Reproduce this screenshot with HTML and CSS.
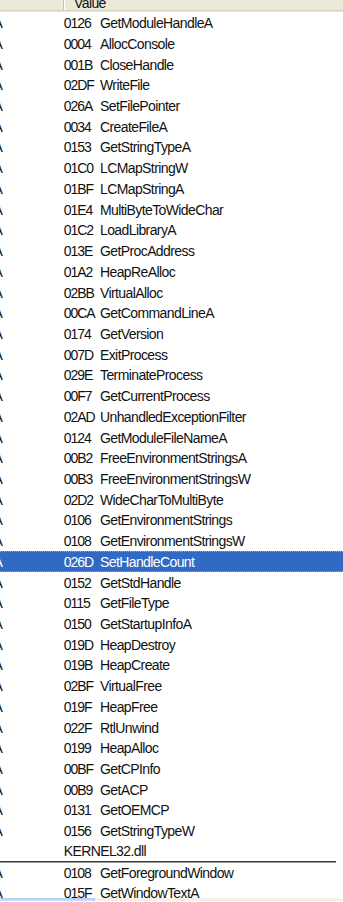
FILE: index.html
```html
<!DOCTYPE html>
<html>
<head>
<meta charset="utf-8">
<link rel="stylesheet" href="styles.css">
</head>
<body>
<div class="header">
  <div class="hcell hcell-first"></div>
  <div class="hcell hcell-value"><span class="htext">Value</span></div>
</div>
<div class="viewport">
  <div class="list">
    <div class="row"><span class="c1"><span class="clip">A</span></span><span class="hint">0126</span><span class="name">GetModuleHandleA</span></div>
    <div class="row"><span class="c1"><span class="clip">A</span></span><span class="hint">0004</span><span class="name">AllocConsole</span></div>
    <div class="row"><span class="c1"><span class="clip">A</span></span><span class="hint">001B</span><span class="name">CloseHandle</span></div>
    <div class="row"><span class="c1"><span class="clip">A</span></span><span class="hint">02DF</span><span class="name">WriteFile</span></div>
    <div class="row"><span class="c1"><span class="clip">A</span></span><span class="hint">026A</span><span class="name">SetFilePointer</span></div>
    <div class="row"><span class="c1"><span class="clip">A</span></span><span class="hint">0034</span><span class="name">CreateFileA</span></div>
    <div class="row"><span class="c1"><span class="clip">A</span></span><span class="hint">0153</span><span class="name">GetStringTypeA</span></div>
    <div class="row"><span class="c1"><span class="clip">A</span></span><span class="hint">01C0</span><span class="name">LCMapStringW</span></div>
    <div class="row"><span class="c1"><span class="clip">A</span></span><span class="hint">01BF</span><span class="name">LCMapStringA</span></div>
    <div class="row"><span class="c1"><span class="clip">A</span></span><span class="hint">01E4</span><span class="name">MultiByteToWideChar</span></div>
    <div class="row"><span class="c1"><span class="clip">A</span></span><span class="hint">01C2</span><span class="name">LoadLibraryA</span></div>
    <div class="row"><span class="c1"><span class="clip">A</span></span><span class="hint">013E</span><span class="name">GetProcAddress</span></div>
    <div class="row"><span class="c1"><span class="clip">A</span></span><span class="hint">01A2</span><span class="name">HeapReAlloc</span></div>
    <div class="row"><span class="c1"><span class="clip">A</span></span><span class="hint">02BB</span><span class="name">VirtualAlloc</span></div>
    <div class="row"><span class="c1"><span class="clip">A</span></span><span class="hint">00CA</span><span class="name">GetCommandLineA</span></div>
    <div class="row"><span class="c1"><span class="clip">A</span></span><span class="hint">0174</span><span class="name">GetVersion</span></div>
    <div class="row"><span class="c1"><span class="clip">A</span></span><span class="hint">007D</span><span class="name">ExitProcess</span></div>
    <div class="row"><span class="c1"><span class="clip">A</span></span><span class="hint">029E</span><span class="name">TerminateProcess</span></div>
    <div class="row"><span class="c1"><span class="clip">A</span></span><span class="hint">00F7</span><span class="name">GetCurrentProcess</span></div>
    <div class="row"><span class="c1"><span class="clip">A</span></span><span class="hint">02AD</span><span class="name">UnhandledExceptionFilter</span></div>
    <div class="row"><span class="c1"><span class="clip">A</span></span><span class="hint">0124</span><span class="name">GetModuleFileNameA</span></div>
    <div class="row"><span class="c1"><span class="clip">A</span></span><span class="hint">00B2</span><span class="name">FreeEnvironmentStringsA</span></div>
    <div class="row"><span class="c1"><span class="clip">A</span></span><span class="hint">00B3</span><span class="name">FreeEnvironmentStringsW</span></div>
    <div class="row"><span class="c1"><span class="clip">A</span></span><span class="hint">02D2</span><span class="name">WideCharToMultiByte</span></div>
    <div class="row"><span class="c1"><span class="clip">A</span></span><span class="hint">0106</span><span class="name">GetEnvironmentStrings</span></div>
    <div class="row"><span class="c1"><span class="clip">A</span></span><span class="hint">0108</span><span class="name">GetEnvironmentStringsW</span></div>
    <div class="row selected"><span class="c1"><span class="clip">A</span></span><span class="hint">026D</span><span class="name">SetHandleCount</span></div>
    <div class="row"><span class="c1"><span class="clip">A</span></span><span class="hint">0152</span><span class="name">GetStdHandle</span></div>
    <div class="row"><span class="c1"><span class="clip">A</span></span><span class="hint">0115</span><span class="name">GetFileType</span></div>
    <div class="row"><span class="c1"><span class="clip">A</span></span><span class="hint">0150</span><span class="name">GetStartupInfoA</span></div>
    <div class="row"><span class="c1"><span class="clip">A</span></span><span class="hint">019D</span><span class="name">HeapDestroy</span></div>
    <div class="row"><span class="c1"><span class="clip">A</span></span><span class="hint">019B</span><span class="name">HeapCreate</span></div>
    <div class="row"><span class="c1"><span class="clip">A</span></span><span class="hint">02BF</span><span class="name">VirtualFree</span></div>
    <div class="row"><span class="c1"><span class="clip">A</span></span><span class="hint">019F</span><span class="name">HeapFree</span></div>
    <div class="row"><span class="c1"><span class="clip">A</span></span><span class="hint">022F</span><span class="name">RtlUnwind</span></div>
    <div class="row"><span class="c1"><span class="clip">A</span></span><span class="hint">0199</span><span class="name">HeapAlloc</span></div>
    <div class="row"><span class="c1"><span class="clip">A</span></span><span class="hint">00BF</span><span class="name">GetCPInfo</span></div>
    <div class="row"><span class="c1"><span class="clip">A</span></span><span class="hint">00B9</span><span class="name">GetACP</span></div>
    <div class="row"><span class="c1"><span class="clip">A</span></span><span class="hint">0131</span><span class="name">GetOEMCP</span></div>
    <div class="row"><span class="c1"><span class="clip">A</span></span><span class="hint">0156</span><span class="name">GetStringTypeW</span></div>
    <div class="row dll"><span class="c1"></span><span class="dllname">KERNEL32.dll</span></div>
    <div class="row"><span class="c1"><span class="clip">A</span></span><span class="hint">0108</span><span class="name">GetForegroundWindow</span></div>
    <div class="row"><span class="c1"><span class="clip">A</span></span><span class="hint">015F</span><span class="name">GetWindowTextA</span></div>
  </div>
</div>
<div class="hscroll">
  <div class="thumb"></div>
  <div class="track"></div>
</div>
</body>
</html>
```

FILE: styles.css
```css
html, body {
  margin: 0;
  padding: 0;
  background: #ffffff;
}

body {
  width: 343px;
  height: 902px;
  overflow: hidden;
  font-family: "Liberation Sans", Arial, sans-serif;
  font-size: 14px;
  letter-spacing: -0.6px;
  color: #111111;
}

.header {
  display: flex;
  height: 10px;
  background: #ECE9D8;
  border-bottom: 1px solid #D8D4C5;
  box-shadow: 0 1px 0 #E6E3D6;
  overflow: hidden;
}

.hcell {
  height: 10px;
  overflow: hidden;
}

.hcell-first {
  width: 63px;
  flex: none;
  border-right: 1px solid #C7C3B3;
}

.hcell-value {
  flex: 1;
  border-left: 1px solid #FFFFFF;
  padding-left: 9px;
}

.htext {
  display: block;
  line-height: 20px;
  margin-top: -7.4px;
}

.viewport {
  height: 886px;
  margin-top: 1px;
  overflow: hidden;
}

.list {
  display: flex;
  flex-direction: column;
  padding-top: 0.8px;
}

.row {
  display: flex;
  align-items: center;
  height: 20.72px;
  flex: none;
  white-space: nowrap;
  box-sizing: border-box;
}

.c1 {
  width: 63.7px;
  flex: none;
  overflow: hidden;
}

.clip {
  display: inline-block;
  margin-left: -6.5px;
}

.hint {
  width: 36.3px;
  flex: none;
  letter-spacing: -1px;
}

.name {
  flex: none;
}

.selected {
  background: #316AC5;
  color: #FFFFFF;
  border-top: 1px dotted #D29B45;
  border-bottom: 1px dotted #D29B45;
}

.dll {
  border-bottom: 1px solid #3C3C3C;
  box-shadow: 0 1px 0 #9A9A9A;
  width: 336px;
}

.dllname {
  flex: none;
}

.hscroll {
  display: flex;
  height: 3px;
}

.thumb {
  width: 95px;
  flex: none;
  background: #C8D7FB;
  border-top: 1px solid #B5C9F5;
  border-right: 1px solid #AFC2EE;
  box-sizing: border-box;
}

.track {
  flex: 1;
  background: #F3F1EA;
}
```
